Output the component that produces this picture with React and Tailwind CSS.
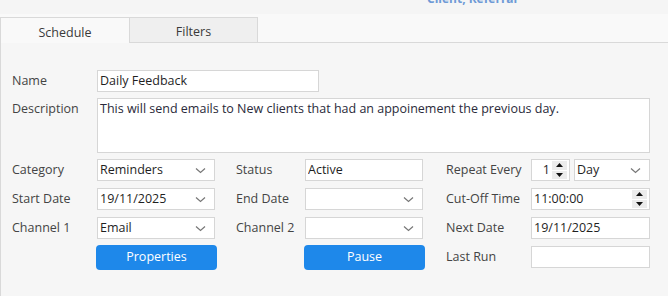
import React from 'react'

const FONT = { fontFamily: '"Open Sans", "Noto Sans", sans-serif' }

function Chevron() {
  return (
    <svg width="11" height="7" viewBox="0 0 11 7" className="shrink-0">
      <path d="M1 1.5 L5.5 5.5 L10 1.5" fill="none" stroke="#777" strokeWidth="1.2" />
    </svg>
  )
}

function SpinButtons() {
  return (
    <div className="flex flex-col gap-[1px] h-full py-[1px]">
      <div className="flex-1 w-[15px] bg-[#ececec] flex items-center justify-center">
        <svg width="7" height="4" viewBox="0 0 7 4"><path d="M0 4 L3.5 0 L7 4 Z" fill="#111" /></svg>
      </div>
      <div className="flex-1 w-[15px] bg-[#ececec] flex items-center justify-center">
        <svg width="7" height="4" viewBox="0 0 7 4"><path d="M0 0 L3.5 4 L7 0 Z" fill="#111" /></svg>
      </div>
    </div>
  )
}

function Box({ value, select, className = 'w-[118px]' }) {
  return (
    <div className={`h-[22px] ${className} bg-white border border-[#d6d6d6] flex items-center pl-[2px] pr-[8px] text-[12.5px] text-[#1f1f1f]`}>
      <span className="flex-1 truncate">{value}</span>
      {select && <Chevron />}
    </div>
  )
}

function Label({ children, w }) {
  return <div className={`${w} text-[12.5px] text-[#444] leading-[22px] whitespace-nowrap`}>{children}</div>
}

function Button({ children }) {
  return (
    <button className="h-[25px] w-[121px] rounded-[4px] bg-[#1e88ea] text-white text-[12.5px]">{children}</button>
  )
}

export default function App() {
  return (
    <div style={FONT} className="w-[668px] h-[296px] bg-[#f5f5f5] overflow-hidden flex flex-col">
      <div className="h-[14px] relative overflow-hidden">
        <div className="absolute left-[427px] -top-[10px] text-[12px] font-bold text-[#6e9ad6]">Client, Referral</div>
      </div>
      <div className="h-[29px] bg-[#f9f9f9] border-b border-[#d9d9d9] flex items-end">
        <div className="w-[130px] h-[26px] border-t border-l border-r border-[#d9d9d9] bg-[#f9f9f9] -mb-[1px] flex items-center justify-center pt-[5px] text-[12.5px] text-[#3a3a3a]">
          Schedule
        </div>
        <div className="w-[128px] h-[25px] border-t border-r border-[#d9d9d9] bg-[#efefef] flex items-center justify-center pt-[5px] text-[12.5px] text-[#3a3a3a]">
          Filters
        </div>
      </div>
      <div className="flex-1 border-l border-[#d9d9d9] bg-[#f6f6f6] pl-[11px] pt-[27px]">
        <div className="flex items-center">
          <Label w="w-[85px]">Name</Label>
          <Box value="Daily Feedback" className="w-[222px]" />
        </div>
        <div className="flex mt-[6px]">
          <Label w="w-[85px]">Description</Label>
          <div className="h-[55px] w-[553px] bg-white border border-[#d6d6d6] px-[2px] pt-[1px] text-[12.5px] text-[#2a2a3a] leading-[18px]">
            This will send emails to New clients that had an appoinement the previous day.
          </div>
        </div>
        <div className="flex mt-[6px]">
          <div className="flex flex-col gap-[7px] w-[224px]">
            <div className="flex"><Label w="w-[85px]">Category</Label><Box value="Reminders" select /></div>
            <div className="flex"><Label w="w-[85px]">Start Date</Label><Box value="19/11/2025" select /></div>
            <div className="flex"><Label w="w-[85px]">Channel 1</Label><Box value="Email" select /></div>
            <div className="flex -mt-[1px]"><div className="w-[84px]" /><Button>Properties</Button></div>
          </div>
          <div className="flex flex-col gap-[7px] w-[210px]">
            <div className="flex"><Label w="w-[69px]">Status</Label><Box value="Active" /></div>
            <div className="flex"><Label w="w-[69px]">End Date</Label><Box value="" select /></div>
            <div className="flex"><Label w="w-[69px]">Channel 2</Label><Box value="" select /></div>
            <div className="flex -mt-[1px]"><div className="w-[68px]" /><Button>Pause</Button></div>
          </div>
          <div className="flex flex-col gap-[7px]">
            <div className="flex">
              <Label w="w-[85px]">Repeat Every</Label>
              <div className="h-[22px] w-[39px] bg-white border border-[#d6d6d6] flex items-center justify-end pl-[2px] pr-[2px] text-[12.5px] text-[#1f1f1f]">
                <span className="mr-[2px]">1</span>
                <SpinButtons />
              </div>
              <Box value="Day" select className="w-[76px] ml-[4px]" />
            </div>
            <div className="flex">
              <Label w="w-[85px]">Cut-Off Time</Label>
              <div className="h-[22px] w-[119px] bg-white border border-[#d6d6d6] flex items-center pl-[2px] pr-[2px] text-[12.5px] text-[#1f1f1f]">
                <span className="flex-1">11:00:00</span>
                <SpinButtons />
              </div>
            </div>
            <div className="flex"><Label w="w-[85px]">Next Date</Label><Box value="19/11/2025" className="w-[119px]" /></div>
            <div className="flex"><Label w="w-[85px]">Last Run</Label><Box value="" className="w-[119px]" /></div>
          </div>
        </div>
      </div>
    </div>
  )
}
